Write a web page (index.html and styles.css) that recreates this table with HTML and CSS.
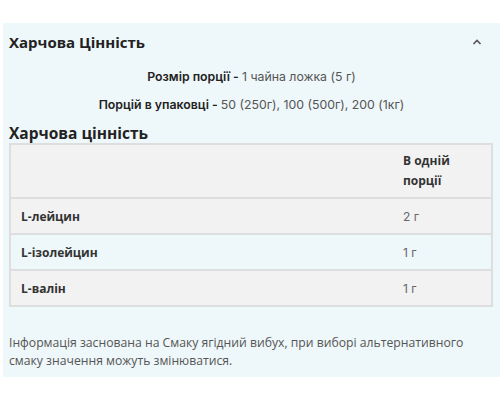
FILE: index.html
```html
<!DOCTYPE html>
<html lang="uk">
<head>
<meta charset="utf-8">
<link rel="stylesheet" href="styles.css">
</head>
<body>
<section class="panel">
  <div class="panel-head">
    <h2 class="title">Харчова Цінність</h2>
    <svg class="chev" width="10" height="6" viewBox="0 0 10 6"><path d="M1.5 5 L5 1.5 L8.5 5" fill="none" stroke="#555" stroke-width="1.6"/></svg>
  </div>
  <p class="serve"><b>Розмір порції - </b>1 чайна ложка (5 г)</p>
  <p class="serve"><b>Порцій в упаковці - </b>50 (250г), 100 (500г), 200 (1кг)</p>
  <h3 class="subtitle">Харчова цінність</h3>
  <table class="facts">
    <thead>
      <tr><th class="name"></th><th class="val">В одній<br>порції</th></tr>
    </thead>
    <tbody>
      <tr class="odd"><td class="name">L-лейцин</td><td class="val">2 г</td></tr>
      <tr><td class="name">L-ізолейцин</td><td class="val">1 г</td></tr>
      <tr class="odd"><td class="name">L-валін</td><td class="val">1 г</td></tr>
    </tbody>
  </table>
  <p class="note">Інформація заснована на Смаку ягідний вибух, при виборі альтернативного смаку значення можуть змінюватися.</p>
</section>
</body>
</html>
```
FILE: styles.css
```css
html, body { margin: 0; padding: 0; background: #fff; }
body { font-family: "Open Sans", sans-serif; color: #333; }
.panel {
  margin: 23px 0 0 3px;
  background: #eef7f9;
  padding: 0 6px 14px 6px;
  height: 340px;
}
.panel-head {
  display: flex;
  align-items: center;
  justify-content: space-between;
  height: 38px;
  padding-bottom: 1px;
}
.title { margin: 0; font-size: 15px; font-weight: 700; color: #222; }
.chev { margin-right: 12px; }
.serve {
  margin: 1px 0 0 0;
  text-align: center;
  font-family: "Inter", sans-serif;
  font-size: 12.3px;
  line-height: 27px;
  color: #555;
}
.serve b { color: #222; font-weight: 600; }
.subtitle { margin: 6px 0 1px 0; font-size: 15.5px; font-weight: 700; color: #222; line-height: 18px; }
.facts {
  width: 484px;
  border-collapse: collapse;
  border: 2px solid #dedede;
  font-size: 12px;
}
.facts th, .facts td {
  text-align: left;
  padding: 0 10px;
  border-bottom: 2px solid #dedede;
}
.facts thead tr { background: #f2f2f2; height: 54px; }
.facts tbody tr { height: 36px; }
.facts tr.odd { background: #f2f2f2; }
.facts th { font-weight: 700; color: #333; line-height: 20px; }
.facts .name { font-weight: 700; color: #333; }
.facts .val { width: 78px; font-family: "Inter", sans-serif; color: #666; }
.facts th.val { font-family: "Open Sans", sans-serif; color: #333; }
.note {
  margin: 27px 0 0 0;
  max-width: 470px;
  font-size: 12.2px;
  line-height: 17.5px;
  color: #555;
}
```
